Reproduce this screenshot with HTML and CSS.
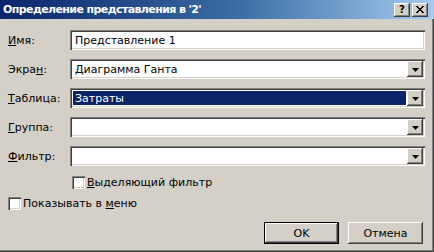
FILE: index.html
```html
<!DOCTYPE html>
<html lang="ru">
<head>
<meta charset="utf-8">
<title>Определение представления</title>
<link rel="stylesheet" href="styles.css">
</head>
<body>
<div class="dialog">
  <div class="titlebar">
    <span class="title">Определение представления в '2'</span>
    <div class="tb-buttons">
      <span class="tb-btn tb-help">?</span>
      <span class="tb-btn tb-close"><svg width="8" height="7" viewBox="0 0 8 7"><path d="M0 0h2v1h1v1h2v-1h1v-1h2v1h-1v1h-1v1h-1v1h1v1h1v1h1v1h-2v-1h-1v-1h-2v1h-1v1h-2v-1h1v-1h1v-1h1v-1h-1v-1h-1v-1h-1z" fill="#000"/></svg></span>
    </div>
  </div>
  <div class="content">
    <div class="form">
      <span class="lbl"><u>И</u>мя:</span>
      <div class="field textbox"><span class="val">Представление 1</span></div>

      <span class="lbl">Экра<u>н</u>:</span>
      <div class="field combo"><span class="val">Диаграмма Ганта</span><span class="drop"><svg width="7" height="4" viewBox="0 0 7 4"><path d="M0 0h7l-3.5 4z" fill="#000"/></svg></span></div>

      <span class="lbl"><u>Т</u>аблица:</span>
      <div class="field combo"><span class="val selected">Затраты</span><span class="drop"><svg width="7" height="4" viewBox="0 0 7 4"><path d="M0 0h7l-3.5 4z" fill="#000"/></svg></span></div>

      <span class="lbl"><u>Г</u>руппа:</span>
      <div class="field combo"><span class="val"></span><span class="drop"><svg width="7" height="4" viewBox="0 0 7 4"><path d="M0 0h7l-3.5 4z" fill="#000"/></svg></span></div>

      <span class="lbl"><u>Ф</u>ильтр:</span>
      <div class="field combo"><span class="val"></span><span class="drop"><svg width="7" height="4" viewBox="0 0 7 4"><path d="M0 0h7l-3.5 4z" fill="#000"/></svg></span></div>

      <label class="check check-in-grid"><span class="box"></span><span><u>В</u>ыделяющий фильтр</span></label>
    </div>
    <label class="check check-menu"><span class="box"></span><span>Показывать в <u>м</u>еню</span></label>
    <div class="buttons">
      <span class="btn btn-default"><span class="btn-inner">OK</span></span>
      <span class="btn"><span class="btn-inner">Отмена</span></span>
    </div>
  </div>
</div>
</body>
</html>
```
FILE: styles.css
```css
html, body {
  margin: 0;
  padding: 0;
  background: #d4d0c8;
}
body {
  font-family: "DejaVu Sans", sans-serif;
  font-size: 11px;
  color: #000;
}
.dialog {
  width: 434px;
  height: 252px;
  box-sizing: border-box;
  background: #d4d0c8;
  box-shadow: inset -1px -1px 0 #404040, inset -2px -2px 0 #808080;
  overflow: hidden;
}
.titlebar {
  height: 19px;
  display: flex;
  align-items: center;
  justify-content: space-between;
  padding: 0 6px 0 3px;
  background: linear-gradient(to right, #0a246a 0%, #3a6ea5 55%, #a6caf0 100%);
}
.title {
  color: #fff;
  font-family: "DejaVu Sans", sans-serif;
  font-weight: bold;
  font-size: 11px;
  letter-spacing: -0.6px;
  white-space: nowrap;
}
.tb-buttons {
  display: flex;
  gap: 2px;
}
.tb-btn {
  width: 16px;
  height: 14px;
  box-sizing: border-box;
  background: #d4d0c8;
  box-shadow: inset -1px -1px 0 #404040, inset 1px 1px 0 #fff, inset -2px -2px 0 #808080;
  display: flex;
  align-items: center;
  justify-content: center;
}
.tb-help {
  font-family: "DejaVu Sans", sans-serif;
  font-weight: bold;
  font-size: 10px;
  line-height: 14px;
}
.content {
  padding-top: 11px;
}
.form {
  display: grid;
  grid-template-columns: 62px 355px;
  grid-auto-rows: 20px;
  row-gap: 9px;
  padding-left: 8px;
}
.lbl {
  display: flex;
  align-items: center;
  white-space: nowrap;
}
.field {
  background: #fff;
  box-sizing: border-box;
  height: 20px;
  box-shadow: inset 1px 1px 0 #808080, inset 2px 2px 0 #404040, inset -1px -1px 0 #fff, inset -2px -2px 0 #d4d0c8;
  display: flex;
  align-items: stretch;
  padding: 2px;
}
.val {
  flex: 1;
  display: flex;
  align-items: center;
  padding-left: 3px;
  white-space: nowrap;
}
.val.selected {
  background: #0a246a;
  color: #fff;
  margin: 1px;
  padding-left: 2px;
}
.drop {
  width: 16px;
  box-sizing: border-box;
  background: #d4d0c8;
  box-shadow: inset -1px -1px 0 #404040, inset 1px 1px 0 #fff, inset -2px -2px 0 #808080;
  display: flex;
  align-items: center;
  justify-content: center;
  padding-top: 1px;
}
.check {
  display: flex;
  align-items: center;
  gap: 2px;
  height: 13px;
  white-space: nowrap;
}
.check .box {
  width: 13px;
  height: 13px;
  box-sizing: border-box;
  background: #fff;
  box-shadow: inset 1px 1px 0 #808080, inset 2px 2px 0 #404040, inset -1px -1px 0 #fff, inset -2px -2px 0 #d4d0c8;
}
.check-in-grid {
  grid-column: 2;
  margin-left: 2px;
  margin-top: 1px;
  align-self: start;
}
.check-menu {
  margin-top: 2px;
  margin-left: 8px;
}
.buttons {
  display: flex;
  justify-content: flex-end;
  gap: 9px;
  padding-right: 11px;
  margin-top: 12px;
}
.btn {
  width: 75px;
  height: 22px;
  box-sizing: border-box;
  background: #d4d0c8;
  box-shadow: inset -1px -1px 0 #404040, inset 1px 1px 0 #fff, inset -2px -2px 0 #808080;
  display: flex;
}
.btn-default {
  border: 1px solid #000;
  box-shadow: none;
}
.btn-inner {
  flex: 1;
  display: flex;
  align-items: center;
  justify-content: center;
}
.btn-default .btn-inner {
  box-shadow: inset -1px -1px 0 #404040, inset 1px 1px 0 #fff, inset -2px -2px 0 #808080;
}
```
